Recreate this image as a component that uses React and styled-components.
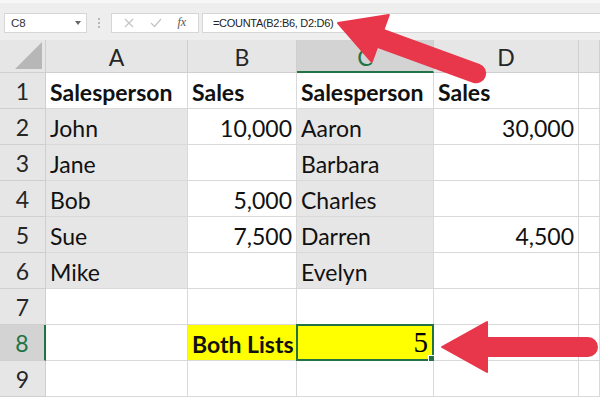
import React from 'react';
import styled, { createGlobalStyle } from 'styled-components';

const GlobalStyle = createGlobalStyle`
  html, body {
    margin: 0;
    padding: 0;
    background: #ffffff;
  }
  * {
    box-sizing: border-box;
  }
`;

const GREEN = '#217346';
const GRID = '#d9d9d9';
const RED = '#e8364a';

const COLUMNS = ['A', 'B', 'C', 'D', ''];
const SELECTED_COL = 'C';
const SELECTED_ROW = 8;

// cells: text, align, bold, fill, selected
const rows = [
  [['Salesperson', 'left', true], ['Sales', 'left', true], ['Salesperson', 'left', true], ['Sales', 'left', true]],
  [['John', 'left', false, 'gray'], ['10,000', 'right'], ['Aaron', 'left', false, 'gray'], ['30,000', 'right']],
  [['Jane', 'left', false, 'gray'], [''], ['Barbara', 'left', false, 'gray'], ['']],
  [['Bob', 'left', false, 'gray'], ['5,000', 'right'], ['Charles', 'left', false, 'gray'], ['']],
  [['Sue', 'left', false, 'gray'], ['7,500', 'right'], ['Darren', 'left', false, 'gray'], ['4,500', 'right']],
  [['Mike', 'left', false, 'gray'], [''], ['Evelyn', 'left', false, 'gray'], ['']],
  [[''], [''], [''], ['']],
  [[''], ['Both Lists', 'left', true, 'yellow'], ['5', 'right', false, 'yellow', true], ['']],
  [[''], [''], [''], ['']],
];

const fills = {
  gray: '#e7e6e6',
  yellow: '#ffff00',
};

const Window = styled.div`
  position: relative;
  width: 600px;
  height: 400px;
  overflow: hidden;
  background: #ffffff;
  font-family: Lato, "Open Sans", sans-serif;
  color: #111;
`;

const FormulaBar = styled.div`
  display: flex;
  align-items: center;
  height: 40px;
  padding: 2px 0 0 4px;
  background: #eeeeee;
  border-top: 3px solid #f7f7f7;
  font-family: "Liberation Sans", Arial, sans-serif;
`;

const NameBox = styled.div`
  display: flex;
  align-items: center;
  justify-content: space-between;
  width: 83px;
  height: 20px;
  padding: 0 5px 0 6px;
  background: #fff;
  border: 1px solid #d6d6d6;
  font-size: 11.5px;
  color: #333;
`;

const Caret = styled.span`
  width: 0;
  height: 0;
  border-left: 3.5px solid transparent;
  border-right: 3.5px solid transparent;
  border-top: 4px solid #666;
`;

const Grip = styled.div`
  display: flex;
  flex-direction: column;
  gap: 2px;
  margin: 0 11px 0 11px;
  span {
    width: 2px;
    height: 2px;
    background: #b8b8b8;
  }
`;

const ButtonBox = styled.div`
  display: flex;
  align-items: center;
  justify-content: space-around;
  width: 88px;
  height: 20px;
  padding: 0 4px;
  background: #fff;
  border: 1px solid #d6d6d6;
  color: #c4c4c4;
`;

const Fx = styled.span`
  font-family: "Liberation Serif", "Times New Roman", serif;
  font-style: italic;
  font-size: 12px;
  color: #555;
`;

const FormulaInput = styled.div`
  flex: 1;
  height: 20px;
  margin-left: 3px;
  padding: 0 0 0 10px;
  display: flex;
  align-items: center;
  background: #fff;
  border: 1px solid #d6d6d6;
  border-right: none;
  font-size: 11px;
  letter-spacing: -0.3px;
  color: #222;
`;

const Sheet = styled.div`
  display: grid;
  grid-template-columns: 46px 142px 109px 137px 145px 1fr;
  grid-template-rows: 33px repeat(9, 36px);
`;

const Corner = styled.div`
  position: relative;
  background: #e6e6e6;
  border-right: 1px solid #cfcfcf;
  border-bottom: 1px solid #cfcfcf;
  &::after {
    content: '';
    position: absolute;
    right: 3px;
    bottom: 3px;
    width: 0;
    height: 0;
    border-left: 27px solid transparent;
    border-bottom: 27px solid #b7b7b7;
  }
`;

const ColHeader = styled.div`
  display: flex;
  align-items: center;
  justify-content: center;
  padding-top: 2px;
  background: ${(p) => (p.$active ? '#d3d3d3' : '#e6e6e6')};
  border-right: 1px solid #cfcfcf;
  border-bottom: ${(p) => (p.$active ? `2px solid ${GREEN}` : '1px solid #cfcfcf')};
  color: ${(p) => (p.$active ? GREEN : '#262626')};
  font-size: 23px;
`;

const RowHeader = styled.div`
  display: flex;
  align-items: center;
  justify-content: center;
  background: ${(p) => (p.$active ? '#d3d3d3' : '#e6e6e6')};
  border-right: ${(p) => (p.$active ? `2px solid ${GREEN}` : '1px solid #cfcfcf')};
  border-bottom: 1px solid #cfcfcf;
  color: ${(p) => (p.$active ? GREEN : '#262626')};
  font-size: 23px;
`;

const Cell = styled.div`
  position: relative;
  display: flex;
  align-items: center;
  justify-content: ${(p) => (p.$align === 'right' ? 'flex-end' : 'flex-start')};
  padding: 2px 4px 0 4px;
  background: ${(p) => fills[p.$fill] || '#fff'};
  border-right: 1px solid ${GRID};
  border-bottom: 1px solid ${GRID};
  font-size: 23px;
  font-weight: ${(p) => (p.$bold ? 700 : 400)};
  white-space: nowrap;
  overflow: visible;
  color: #111;
`;

const SelectedCell = styled(Cell)`
  border: 2px solid ${GREEN};
  margin: -1px 0 0 -1px;
  padding: 0 4px 0 4px;
  &::after {
    content: '';
    position: absolute;
    right: -4px;
    bottom: -4px;
    width: 6px;
    height: 6px;
    background: ${GREEN};
    border: 1px solid #fff;
  }
`;

const SerifValue = styled.span`
  font-family: "Liberation Serif", "DejaVu Serif", serif;
  font-size: 29px;
  line-height: 1;
  color: #000;
`;

const Overlay = styled.svg`
  position: absolute;
  left: 0;
  top: 0;
  pointer-events: none;
`;

function Arrow({ x, y, angle, length }) {
  return (
    <g transform={`translate(${x} ${y}) rotate(${angle})`}>
      <line x1="40" y1="0" x2={length} y2="0" stroke={RED} strokeWidth="20" strokeLinecap="round" />
      <polygon points="0,0 45,-25 45,25" fill={RED} strokeLinejoin="round" stroke={RED} strokeWidth="2" />
    </g>
  );
}

export default function App() {
  return (
    <Window>
      <GlobalStyle />
      <FormulaBar>
        <NameBox>
          C8
          <Caret />
        </NameBox>
        <Grip>
          <span />
          <span />
          <span />
        </Grip>
        <ButtonBox>
          <svg width="10" height="10" viewBox="0 0 10 10">
            <path d="M1 1 L9 9 M9 1 L1 9" stroke="#c4c4c4" strokeWidth="1.2" />
          </svg>
          <svg width="12" height="10" viewBox="0 0 12 10">
            <path d="M1 5 L4.5 8.5 L11 1" stroke="#c4c4c4" strokeWidth="1.2" fill="none" />
          </svg>
          <Fx>fx</Fx>
        </ButtonBox>
        <FormulaInput>=COUNTA(B2:B6, D2:D6)</FormulaInput>
      </FormulaBar>

      <Sheet>
        <Corner />
        {COLUMNS.map((c, i) => (
          <ColHeader key={i} $active={c === SELECTED_COL}>{c}</ColHeader>
        ))}
        {rows.map((row, r) => {
          const n = r + 1;
          return (
            <React.Fragment key={n}>
              <RowHeader $active={n === SELECTED_ROW}>{n}</RowHeader>
              {row.map(([text, align, bold, fill, selected], c) =>
                selected ? (
                  <SelectedCell key={c} $align={align} $fill={fill}>
                    <SerifValue>{text}</SerifValue>
                  </SelectedCell>
                ) : (
                  <Cell key={c} $align={align} $bold={bold} $fill={fill}>
                    {text}
                  </Cell>
                )
              )}
              <Cell />
            </React.Fragment>
          );
        })}
      </Sheet>

      <Overlay width="600" height="400" viewBox="0 0 600 400">
        <Arrow x={338} y={23} angle={20} length={147} />
        <Arrow x={442} y={347} angle={0} length={588 - 442} />
      </Overlay>
    </Window>
  );
}
